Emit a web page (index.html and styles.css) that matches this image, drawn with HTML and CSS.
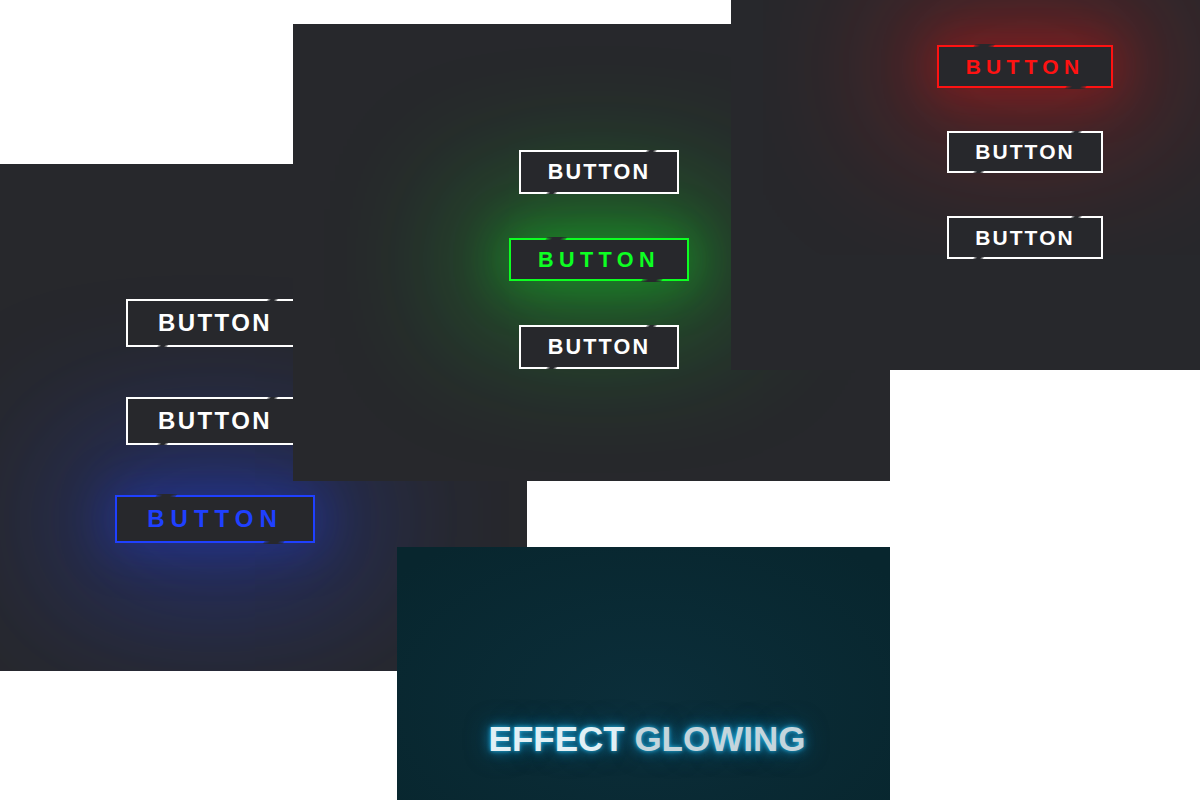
FILE: index.html
```html
<!DOCTYPE html>
<html lang="en">
<head>
<meta charset="utf-8">
<title>Neon buttons</title>
<link rel="stylesheet" href="styles.css">
</head>
<body>
<div class="canvas">
  <section class="panel panel-blue">
    <a class="neon" href="#">BUTTON</a>
    <a class="neon" href="#">BUTTON</a>
    <a class="neon neon-on neon-blue" href="#">BUTTON</a>
  </section>
  <section class="panel panel-green">
    <a class="neon" href="#">BUTTON</a>
    <a class="neon neon-on neon-green" href="#">BUTTON</a>
    <a class="neon" href="#">BUTTON</a>
  </section>
  <section class="panel panel-red">
    <a class="neon neon-on neon-red" href="#">BUTTON</a>
    <a class="neon" href="#">BUTTON</a>
    <a class="neon" href="#">BUTTON</a>
  </section>
  <section class="panel panel-glow">
    <h1 class="glow-text"><span class="w1">EFFECT</span> <span class="w2">GLOWING</span></h1>
  </section>
</div>
</body>
</html>
```
FILE: styles.css
```css
html, body {
  margin: 0;
  padding: 0;
  background: #ffffff;
}
body {
  width: 1200px;
  height: 800px;
  overflow: hidden;
  font-family: "Liberation Sans", Arial, sans-serif;
}
.canvas {
  position: relative;
  width: 1200px;
  height: 800px;
}
.panel {
  position: absolute;
  box-sizing: border-box;
  overflow: hidden;
  background: #27282c;
  display: flex;
  flex-direction: column;
  align-items: center;
}
.panel-blue {
  left: 0;
  top: 164px;
  width: 527px;
  height: 507px;
  padding: 135px 97px 0 0;
  gap: 50px;
  font-size: 24px;
  z-index: 1;
}
.panel-green {
  left: 293px;
  top: 24px;
  width: 597px;
  height: 457px;
  padding: 126px 0 0 15px;
  gap: 44px;
  font-size: 21.6px;
  z-index: 2;
}
.panel-red {
  left: 731px;
  top: 0;
  width: 469px;
  height: 370px;
  padding: 45px 0 0 119px;
  gap: 43px;
  font-size: 21px;
  z-index: 3;
}
.panel-glow {
  left: 397px;
  top: 547px;
  width: 493px;
  height: 253px;
  padding: 174px 0 0 7px;
  background: radial-gradient(ellipse 320px 200px at 50% 62%, #0b2e3a 0%, #09293300 100%), #08262e;
  z-index: 4;
}

.neon {
  --clr: #ffffff;
  position: relative;
  z-index: 1;
  display: inline-block;
  box-sizing: border-box;
  padding: 0.4167em 1.25em;
  border: 2px solid var(--clr);
  background: #27282c;
  color: var(--clr);
  font-size: 1em;
  font-weight: bold;
  line-height: 1;
  letter-spacing: 0.1em;
  text-decoration: none;
  white-space: nowrap;
}
.neon::before,
.neon::after {
  content: "";
  position: absolute;
  width: 10px;
  height: 3px;
  background: linear-gradient(90deg, rgba(39, 40, 44, 0.3), #27282c 35%, #27282c 65%, rgba(39, 40, 44, 0.3));
}
.neon::before {
  top: -2px;
  left: 80%;
  transform: skewX(325deg);
}
.neon::after {
  bottom: -2px;
  left: 20%;
  transform: translateX(-50%) skewX(325deg);
}
.neon-on {
  z-index: 0;
  letter-spacing: 0.25em;
}
.neon-on::before,
.neon-on::after {
  width: 20px;
  height: 4px;
  background: linear-gradient(90deg, rgba(39, 40, 44, 0.4), #27282c 30%, #27282c 70%, rgba(39, 40, 44, 0.4));
}
.neon-on::before {
  top: -3px;
  left: 20%;
}
.neon-on::after {
  bottom: -3px;
  left: 80%;
}
.neon-blue {
  --clr: #1f40ff;
  box-shadow: 0 0 50px 6px rgba(31, 64, 255, 0.3), 0 0 160px 45px rgba(31, 64, 255, 0.4);
}
.neon-green {
  --clr: #0dff22;
  box-shadow: 0 0 50px 6px rgba(13, 255, 34, 0.32), 0 0 140px 38px rgba(13, 255, 34, 0.38);
}
.neon-red {
  --clr: #ff1212;
  box-shadow: 0 0 50px 6px rgba(255, 18, 18, 0.3), 0 0 150px 42px rgba(255, 18, 18, 0.34);
}

.glow-text {
  margin: 0;
  font-family: "Liberation Sans", Arial, sans-serif;
  font-weight: bold;
  font-size: 35px;
  line-height: 1;
  white-space: nowrap;
  text-shadow: 0 0 4px rgba(40, 190, 240, 0.9), 0 0 12px rgba(20, 160, 220, 0.8), 0 0 24px rgba(10, 130, 200, 0.5);
}
.glow-text .w1 {
  color: #e2f0f5;
}
.glow-text .w2 {
  color: #c4d5dc;
}
```
